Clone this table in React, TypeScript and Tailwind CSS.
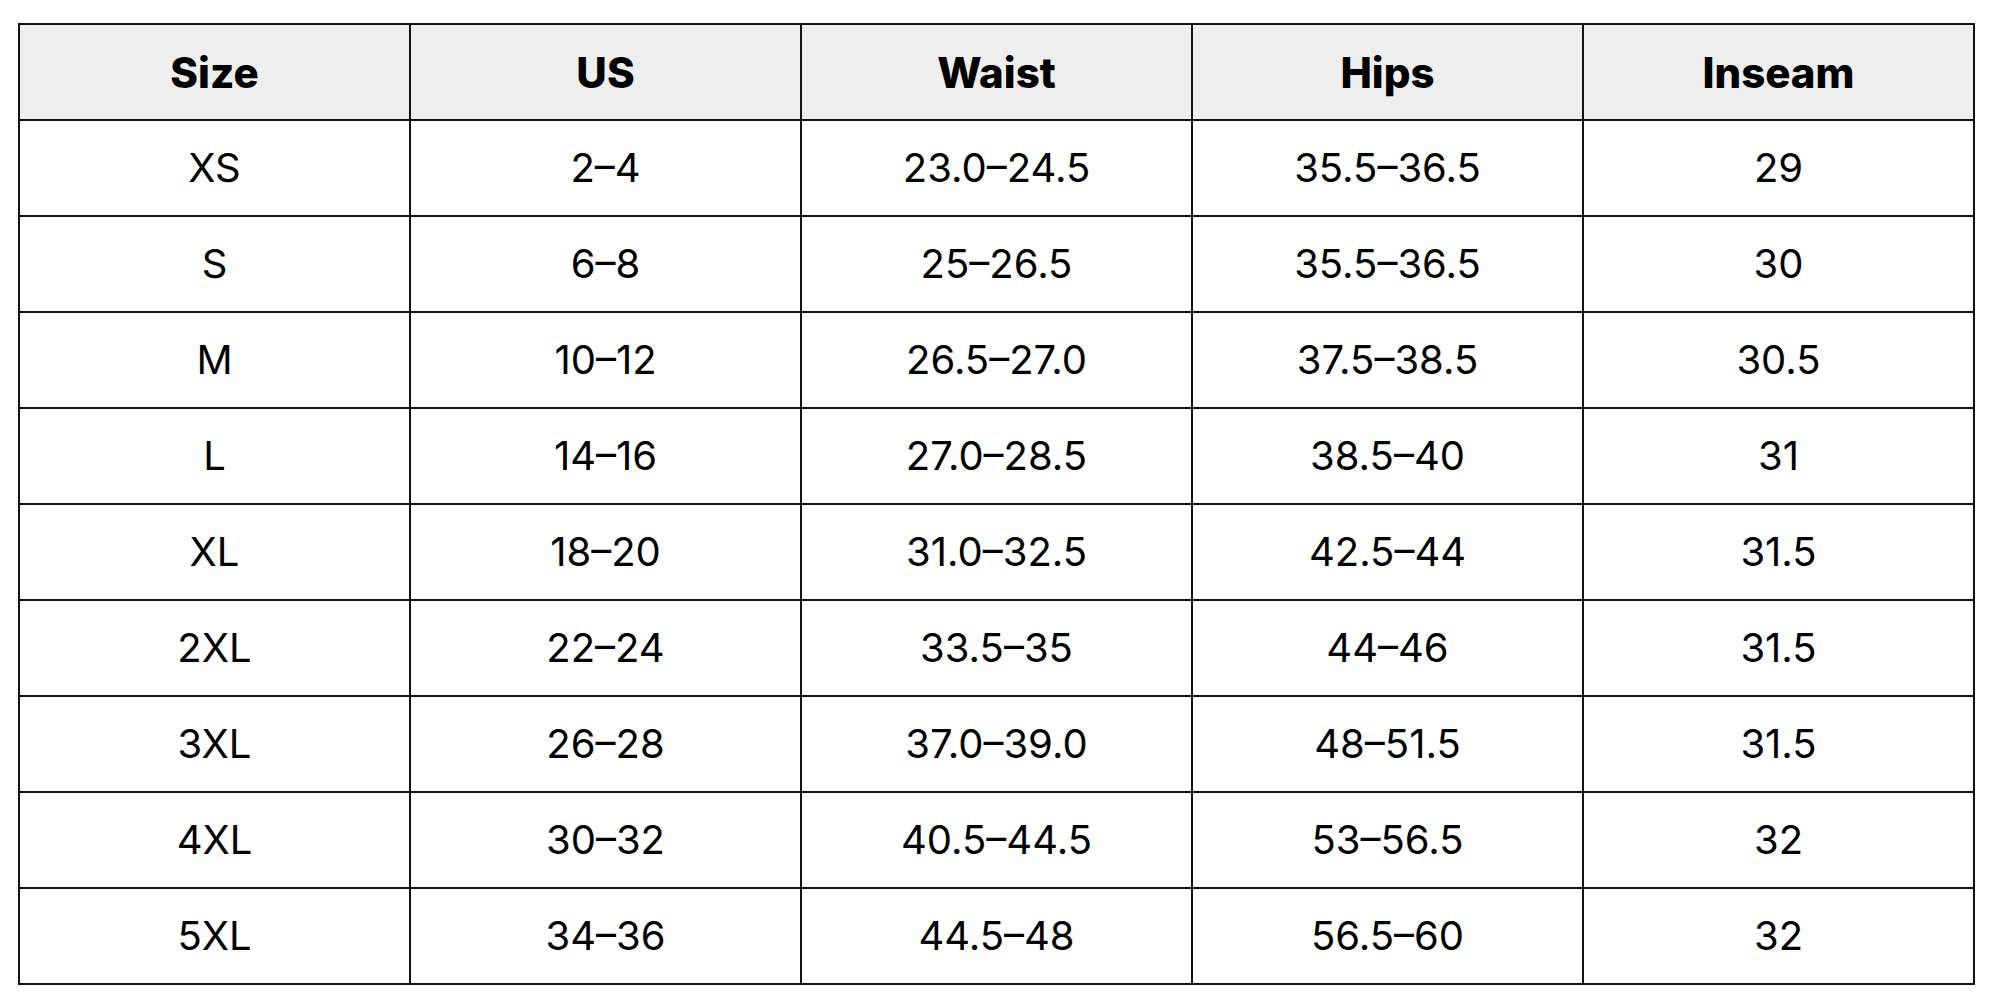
const headers = ["Size", "US", "Waist", "Hips", "Inseam"];

const rows = [
  ["XS", "2–4", "23.0–24.5", "35.5–36.5", "29"],
  ["S", "6–8", "25–26.5", "35.5–36.5", "30"],
  ["M", "10–12", "26.5–27.0", "37.5–38.5", "30.5"],
  ["L", "14–16", "27.0–28.5", "38.5–40", "31"],
  ["XL", "18–20", "31.0–32.5", "42.5–44", "31.5"],
  ["2XL", "22–24", "33.5–35", "44–46", "31.5"],
  ["3XL", "26–28", "37.0–39.0", "48–51.5", "31.5"],
  ["4XL", "30–32", "40.5–44.5", "53–56.5", "32"],
  ["5XL", "34–36", "44.5–48", "56.5–60", "32"],
];

export default function App() {
  return (
    <div className="min-h-screen bg-white pl-[18px] pt-[23px] font-['Inter',sans-serif] text-black">
      <table className="h-[962px] w-[1957px] table-fixed border-collapse border-2 border-[#111]">
        <thead>
          <tr className="h-[96px] bg-[#eeeeee]">
            {headers.map((h) => (
              <th key={h} className="border-2 border-[#111] p-0 text-center text-[42px] font-extrabold">
                {h}
              </th>
            ))}
          </tr>
        </thead>
        <tbody>
          {rows.map((row) => (
            <tr key={row[0]} className="h-[96px]">
              {row.map((cell, i) => (
                <td key={i} className="border-2 border-[#111] p-0 text-center text-[40px] font-normal">
                  {cell}
                </td>
              ))}
            </tr>
          ))}
        </tbody>
      </table>
    </div>
  );
}
